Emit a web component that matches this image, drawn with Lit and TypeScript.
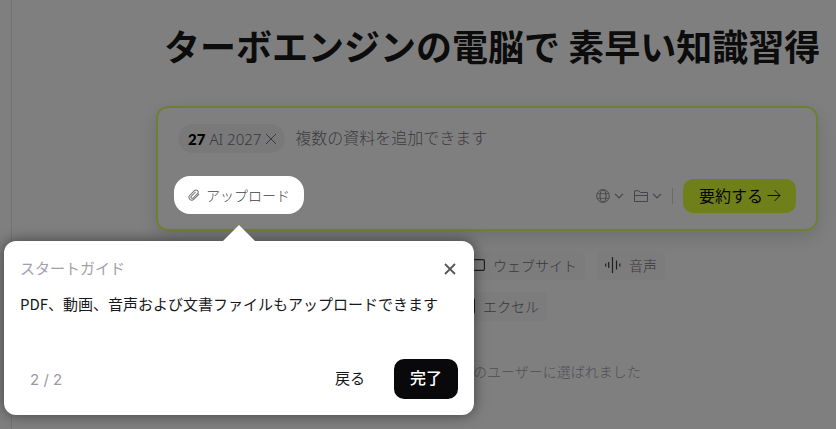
import { LitElement, html, css, svg } from "lit";
import { customElement, property, state } from "lit/decorators.js";

const cross = html`<svg viewBox="0 0 12 12" width="12" height="12" aria-hidden="true">
  <path d="M1 1L11 11M11 1L1 11" fill="none" stroke="currentColor" /></svg>`;
const chevron = html`<svg viewBox="0 0 10 6" width="10" height="6" aria-hidden="true">
  <path d="M1 .8L5 4.8L9 .8" fill="none" stroke="currentColor" stroke-width="1.2" /></svg>`;

const sourceIcons: Record<string, unknown> = {
  web: svg`<rect x=".6" y="2.6" width="14.8" height="10.8" rx="1.4" />`,
  audio: svg`<path d="M.7 6.5v3M3.7 5v6M7.5 0v16M11.5 3.5v9M14.8 6.5v3" />`,
  sheet: svg`<rect x="1.4" y=".6" width="14" height="14.8" rx="1.4" />`,
};

@customElement("start-guide")
export class StartGuide extends LitElement {
  @property({ type: Number }) step = 2;
  @property({ type: Number }) total = 2;

  static styles = css`
    :host { display: block; position: relative; box-sizing: border-box; padding: 16px; background: #fff;
      border-radius: 12px; box-shadow: 0 0 14px rgba(0, 0, 0, 0.5); color: #18181b; white-space: nowrap; }
    .arrow { position: absolute; left: 219px; top: -16px; display: block; }
    header, footer { display: flex; align-items: center; justify-content: space-between; }
    header { height: 24px; }
    h2 { margin: 0; padding-bottom: 2px; font-size: 15px; line-height: 20px; font-weight: 400; color: #a1a1aa; }
    p { margin: 11px 0 43px; font-size: 15px; line-height: 24px; font-weight: 400; }
    button { font: inherit; border: 0; background: none; color: inherit; cursor: pointer; }
    .close { display: flex; padding: 2px; color: #55555b; }
    .close svg { stroke-width: 1.8; }
    .count { padding-left: 10px; font: 15px "Inter", sans-serif; color: #9a9aa2; }
    .actions { display: flex; gap: 16px; }
    .back { padding: 0 13px 4px 12px; font-size: 15px; font-weight: 400; }
    .done { height: 40px; padding: 0 16px 4px; border-radius: 10px; background: #09090b; color: #fff;
      font-size: 16px; font-weight: 500; }
  `;

  render() {
    return html`
      <svg class="arrow" width="32" height="17" viewBox="0 0 32 17" aria-hidden="true">
        <path d="M0 16L16 0L32 16V17H0z" fill="#fff" /></svg>
      <header>
        <h2>スタートガイド</h2>
        <button class="close" aria-label="閉じる">${cross}</button>
      </header>
      <p>PDF、動画、音声および文書ファイルもアップロードできます</p>
      <footer>
        <span class="count">${this.step} / ${this.total}</span>
        <div class="actions">
          <button class="back">戻る</button>
          <button class="done">完了</button>
        </div>
      </footer>`;
  }
}

@customElement("app-root")
export class AppRoot extends LitElement {
  @state() private rows = [
    [{ icon: "web", label: "ウェブサイト" }, { icon: "audio", label: "音声" }],
    [{ icon: "sheet", label: "エクセル" }],
  ];

  static styles = css`
    :host { display: flex; min-height: 100vh; overflow: hidden; background: #fff; color: #18181b;
      font-family: "Noto Sans CJK JP", sans-serif; font-weight: 300; }
    .rail { flex: 0 0 11px; border-right: 1px solid #e4e4e7; }
    main { flex: 1; min-width: 0; padding: 18px 18px 0 144px; }
    h1 { margin: 0 0 0 8px; font-size: 36px; line-height: 54px; font-weight: 700; white-space: nowrap; }
    button { font: inherit; color: inherit; border: 0; background: none; padding: 0; cursor: pointer; }
    .card { margin-top: 34px; padding: 16px 20px 13px 16px; border: 2px solid #d8ff6c; border-radius: 12px;
      box-shadow: 0 6px 20px rgba(0, 0, 0, 0.14); }
    .entry { display: flex; align-items: center; gap: 10px; padding-left: 4px; }
    .file { display: flex; align-items: center; gap: 4px; height: 29px; padding: 0 8px 0 10px;
      border-radius: 15px; background: #f3f3f4; font-size: 15px; color: #71717a; white-space: nowrap; }
    .mark { font: 900 15px "Lato", sans-serif; color: #000; }
    .name { font-family: "Noto Sans", "Noto Sans CJK JP", sans-serif; font-size: 15px; }
    .remove { display: flex; }
    .query { flex: 1; min-width: 0; padding: 0 0 4px; border: 0; outline: 0; background: none; font: inherit;
      font-size: 16px; line-height: 24px; height: 24px; }
    .query::placeholder { color: #77777f; opacity: 1; }
    .tools { display: flex; align-items: flex-start; justify-content: space-between; height: 40px; margin-top: 23px; }
    .target { position: relative; display: flex; }
    .upload { display: flex; align-items: center; gap: 6px; height: 38px; padding: 0 14px; font-size: 14px;
      color: #3f3f46; white-space: nowrap; }
    .upload svg { color: #71717a; }
    .spotlight { position: absolute; inset: 0; z-index: 1; border-radius: 16px; pointer-events: none;
      box-shadow: 0 0 0 2000px rgba(0, 0, 0, 0.5); }
    start-guide { position: absolute; z-index: 2; top: 65px; left: -170px; width: 470px; }
    .right { display: flex; align-items: center; height: 40px; color: #8a8a93; }
    .pick { display: flex; align-items: center; gap: 4px; margin-right: 10px; }
    .rule { width: 1px; height: 16px; margin-right: 10px; background: #d4d4d8; }
    .go { display: flex; align-items: center; gap: 4px; height: 34px; padding: 0 15px 2px 16px;
      border-radius: 10px; background: #deff32; color: #09090b; font-size: 16px; font-weight: 400; white-space: nowrap; }
    .sources { display: flex; flex-direction: column; gap: 12px; margin-top: 20px; }
    .row { display: flex; gap: 12px; padding-left: 305px; }
    .row + .row { padding-left: 295px; }
    .source { display: flex; align-items: center; gap: 8px; height: 29px; padding: 0 8px 2px; border-radius: 4px;
      background: #f8f8f9; color: #71717a; font-size: 14px; white-space: nowrap; }
    .source svg { color: #3f3f46; }
    .trust { margin: 39px 0 0 317px; font-size: 14px; line-height: 22px; color: #a1a1aa; white-space: nowrap; }
  `;

  render() {
    return html`
      <div class="rail"></div>
      <main>
        <h1>ターボエンジンの電脳で 素早い知識習得</h1>
        <section class="card">
          <div class="entry">
            <span class="file">
              <span class="mark">27</span>
              <span class="name">AI 2027</span>
              <button class="remove" aria-label="削除">${cross}</button>
            </span>
            <input class="query" aria-label="資料" placeholder="複数の資料を追加できます" />
          </div>
          <div class="tools">
            <div class="target">
              <button class="upload">
                <svg width="12" height="12" viewBox="0 0 14 14" fill="none" stroke="currentColor" aria-hidden="true">
                  <path d="M12.6 6.2L7 11.8C5.6 13.2 3.5 13.2 2.2 12C.9 10.7 .9 8.6 2.2 7.3L7.5 2C8.5 1 10.1 1 11.1 2C12.1 3 12.1 4.5 11.1 5.5L6 10.5C5.4 11.1 4.5 11.1 3.9 10.5C3.3 9.9 3.3 9 3.9 8.4L8.6 3.8" stroke-width="1.2" stroke-linecap="round" /></svg>
                アップロード
              </button>
              <div class="spotlight"></div>
              <start-guide></start-guide>
            </div>
            <div class="right">
              <button class="pick" aria-label="言語">
                <svg width="14" height="14" viewBox="0 0 14 14" fill="none" stroke="currentColor" aria-hidden="true">
                  <circle cx="7" cy="7" r="6.3" /><ellipse cx="7" cy="7" rx="3" ry="6.3" />
                  <path d="M1.3 4.7H12.7M1.3 9.3H12.7" stroke-width=".8" /></svg>
                ${chevron}
              </button>
              <button class="pick" aria-label="フォルダ">
                <svg width="14" height="12" viewBox="0 0 14 12" fill="none" stroke="currentColor" aria-hidden="true">
                  <path d="M.5 11.5V.8H5L6.3 2.5H13.5V11.5zM.5 5.5H13.5" stroke-linejoin="round" /></svg>
                ${chevron}
              </button>
              <span class="rule"></span>
              <button class="go">要約する
                <svg width="14" height="14" viewBox="0 0 14 14" fill="none" stroke="currentColor" aria-hidden="true">
                  <path d="M.5 7.5H13M7.5 2L13 7.5L7.5 13" stroke-width=".9" /></svg>
              </button>
            </div>
          </div>
        </section>
        <div class="sources">
          ${this.rows.map((row) => html`<div class="row">
            ${row.map((s) => html`<button class="source">
              <svg width="16" height="16" viewBox="0 0 16 16" fill="none" stroke="currentColor" stroke-width="1.2"
                aria-hidden="true">${sourceIcons[s.icon]}</svg>${s.label}</button>`)}
          </div>`)}
        </div>
        <p class="trust">のユーザーに選ばれました</p>
      </main>`;
  }
}
